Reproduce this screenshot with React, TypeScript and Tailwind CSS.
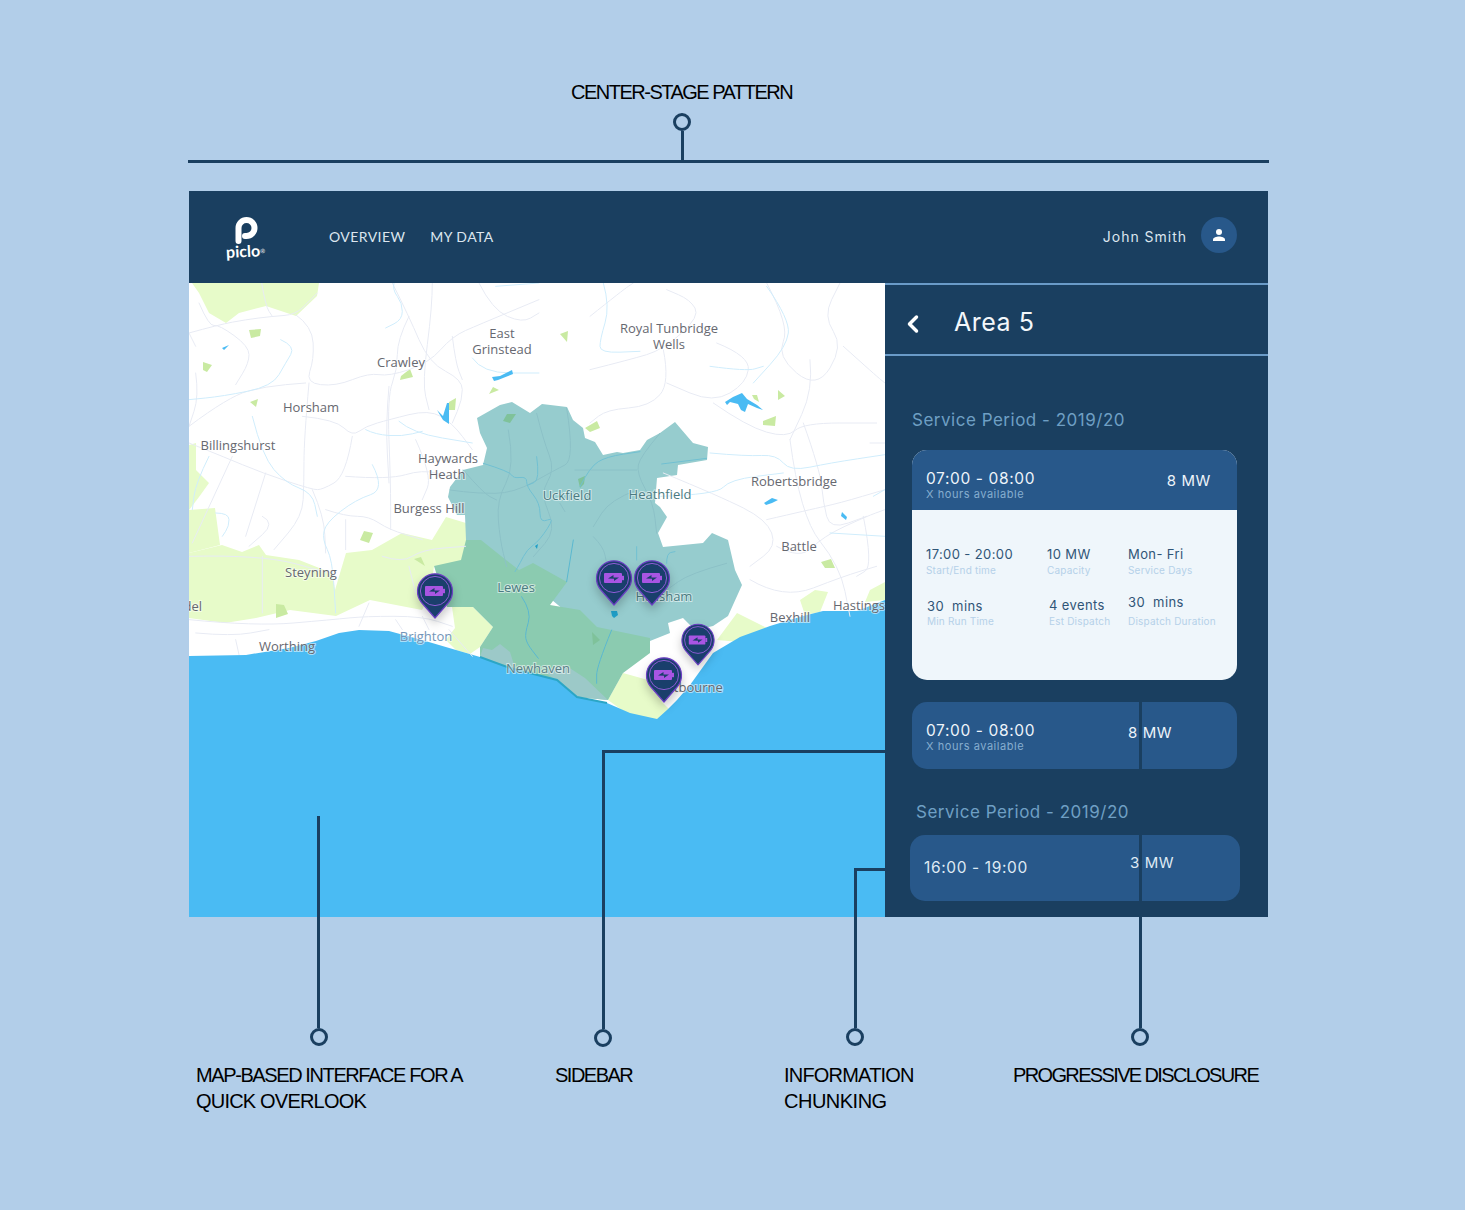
import { ChevronLeft } from "lucide-react"

const sans = "font-['Inter',sans-serif]"

// map linework, traced in crop coordinates (3x), grouped by crop origin
const westRoads = [
  "M0 150 L90 125 L170 110 L250 100 L320 95 L365 50 L385 30",
  "M30 60 L60 130 L90 125 L180 190 L180 240 L140 305",
  "M218 0 L230 70 L250 100",
  "M320 95 L370 130 L375 230 L350 300 L440 310 L540 270 L600 280 L720 240 L790 160 L870 125 L1050 50",
  "M610 0 L660 100 L720 240 L820 290 L820 350 L790 420",
  "M730 0 L730 70 L700 300 L720 380",
  "M660 100 L625 170 L625 260 L595 340 L605 600 L605 740",
  "M600 310 L590 420 L600 600",
  "M870 0 L910 80 L1000 120 L1050 90",
  "M790 160 L800 240 L820 290",
  "M360 300 L345 470 L345 600 L340 700 L255 800",
  "M0 430 L120 340 L230 310 L350 300",
  "M20 190 L0 150",
  "M20 270 L30 340 L0 430",
  "M340 400 L440 410 L490 460 L530 430 L600 410 L720 380 L790 420 L850 500",
  "M490 460 L470 580 L400 620 L370 620 L220 570 L100 520 L0 480",
  "M230 570 L170 760",
  "M470 580 L600 590 L700 560 L780 580",
  "M130 520 L10 780",
  "M370 620 L405 700 L410 810",
  "M410 680 L470 700 L540 700 L600 740 L700 770",
  "M470 710 L470 800",
  "M220 820 L220 990",
  "M0 820 L220 815 L420 870",
  "M0 1010 L200 1030 L430 1010 L530 1000 L700 1000 L790 1030",
  "M580 820 L640 840 L700 800 L830 790",
  "M660 850 L680 930",
  "M700 1000 L720 1040",
  "M620 1010 L640 1040",
  "M540 960 L510 1030",
  "M140 1070 L150 1115",
  "M20 1050 L130 1060 L240 1040",
  "M780 1040 L850 1120",
  "M680 470 L730 580 L700 650",
  "M220 700 L260 720 L180 790",
]
const westRivers = [
  "M615 0 L610 20 L640 60 L640 110 L590 135",
  "M275 170 L320 190 L290 240 L250 310 L100 340 L0 350",
  "M630 415 L670 450 L850 480",
  "M530 440 L560 455 L640 460 L700 445",
  "M550 545 L590 620 L500 650 L410 720 L400 770 L430 830 L440 990",
  "M190 400 L220 520 L290 600 L370 630 L385 700",
  "M850 225 L880 270 L1050 270",
  "M920 10 L1050 0",
  "M60 520 L20 600 L10 680",
  "M80 690 L120 690 L120 730 L100 760",
]
const eastRoads = [
  "M220 200 L240 300 L180 370 L50 380 L0 420",
  "M0 260 L120 230 L220 200 L330 100 L300 50 L230 20",
  "M380 180 L480 220 L470 300 L370 360 L230 300",
  "M530 0 L600 130 L560 220 L680 320 L760 190 L700 100 L750 0",
  "M370 360 L470 430 L590 465 L640 420 L860 420",
  "M600 470 L630 700 L750 850 L780 1000",
  "M660 230 L670 320 L600 470",
  "M220 570 L390 640 L530 710 L560 790 L480 850",
  "M560 790 L630 830 L700 760 L830 700 L885 680",
  "M530 710 L660 680 L750 660 L885 620",
  "M480 890 L580 950 L760 880 L860 850",
  "M640 420 L690 560 L700 660 L720 740 L830 700",
  "M820 700 L850 850 L800 880",
  "M760 190 L860 280 L885 300",
  "M840 480 L885 480",
  "M0 100 L100 20 L130 0",
]
const eastRivers = [
  "M360 250 L470 265 L520 250",
  "M530 10 L600 110 L590 190 L490 300",
  "M40 0 L60 70 L30 170 L30 210 L150 205",
  "M360 510 L470 520 L560 515 L600 565 L720 540 L885 515",
  "M210 640 L380 635 L420 590 L580 570",
  "M720 750 L885 760",
  "M850 640 L885 620",
]
const tealRoads = [
  "M265 120 L285 230 L230 330 L240 450 L260 530",
  "M350 70 L370 150 L405 240 L360 310 L410 420 L340 500",
  "M440 55 L465 210 L405 240 L280 310 L170 310 L90 300",
  "M720 130 L660 200 L650 250 L700 340 L710 430",
  "M465 240 L650 240",
  "M650 300 L570 330 L520 410",
  "M420 340 L435 365",
  "M130 240 L190 310 L230 330",
  "M520 440 L550 470 L560 520",
  "M920 520 L810 550 L740 600",
]
const tealRivers = [
  "M190 220 L270 245 L280 265 L320 260 L320 290 L360 340 L360 400 L405 380 L360 450 L320 480 L300 520 L285 545",
  "M350 200 L360 270 L325 285",
  "M480 290 L510 230 L560 200 L660 185",
  "M725 222 L860 205",
  "M650 470 L650 510",
  "M740 520 L740 490 L765 485",
]
const coastRivers = [
  "M365 170 L395 215 L375 280 L380 310 L415 355",
  "M635 270 L590 380 L590 430",
  "M520 0 L500 125",
]

// rounds a traced polyline into a quadratic curve through its midpoints
function smooth(d: string) {
  const pts = d.replace(/[ML]/g, "").trim().split(/\s+/).map(Number)
  const xy: [number, number][] = []
  for (let i = 0; i < pts.length; i += 2) xy.push([pts[i], pts[i + 1]])
  let out = `M${xy[0][0]} ${xy[0][1]}`
  for (let i = 1; i < xy.length - 1; i++) {
    const mx = (xy[i][0] + xy[i + 1][0]) / 2
    const my = (xy[i][1] + xy[i + 1][1]) / 2
    out += ` Q${xy[i][0]} ${xy[i][1]} ${mx} ${my}`
  }
  const last = xy[xy.length - 1]
  return `${out} L${last[0]} ${last[1]}`
}

const labels: [string, number, number, string?][] = [
  ["East", 502, 338],
  ["Grinstead", 502, 354],
  ["Royal Tunbridge", 669, 333],
  ["Wells", 669, 349],
  ["Crawley", 401, 367],
  ["Horsham", 311, 412],
  ["Billingshurst", 238, 450],
  ["Haywards", 448, 463],
  ["Heath", 447, 479],
  ["Burgess Hill", 429, 513],
  ["Uckfield", 567, 500, "#4b7b81"],
  ["Heathfield", 660, 499, "#4b7b81"],
  ["Robertsbridge", 794, 486],
  ["Battle", 799, 551],
  ["Steyning", 311, 577],
  ["Lewes", 516, 592, "#4b7b81"],
  ["Hailsham", 664, 601, "#4b7b81"],
  ["Bexhill", 790, 622],
  ["Hastings", 859, 610],
  ["Brighton", 426, 641, "#7295b8"],
  ["Worthing", 287, 651],
  ["Newhaven", 538, 673, "#5a7f86"],
  ["Eastbourne", 688, 692],
  ["Arundel", 178, 611],
]

function Pin({ x, y, s = 1 }: { x: number; y: number; s?: number }) {
  return (
    <g transform={`translate(${x} ${y}) scale(${s})`} className="drop-shadow-[0_5px_5px_rgba(0,0,0,0.22)]">
      <path d="M0 27 L-13.5 11.5 A17.5 17.5 0 1 1 13.5 11.5 Z" fill="#1a3f6c" stroke="#6b3fc4" strokeWidth="1.2" strokeLinejoin="round" />
      <circle r="14.6" fill="none" stroke="#9a5fe0" strokeWidth="0.9" />
      <rect x="-10" y="-5" width="18" height="10" rx="1" fill="#a855e3" />
      <rect x="8" y="-2.2" width="2" height="4.4" fill="#a855e3" />
      <path d="M-6 0.6 L-0.5 -3 L-0.5 -0.6 L5 -0.6 L0 3 L0 0.8 Z" fill="#1a3f6c" />
    </g>
  )
}

function Lines({ list, origin, road, river, riverColor }: { list: string[]; origin: string; road: string; river: string[]; riverColor: string }) {
  return (
    <g transform={`translate(${origin}) scale(0.3333)`} fill="none" strokeWidth="3" strokeLinecap="round">
      <g stroke={road}>{list.map((d) => <path key={d} d={smooth(d)} />)}</g>
      <g stroke={riverColor}>{river.map((d) => <path key={d} d={smooth(d)} />)}</g>
    </g>
  )
}

function MapCanvas() {
  return (
    <svg viewBox="189 283 696 634" className="block w-[696px] h-[634px] shrink-0 bg-white">
      {/* land cover */}
      <g fill="#e7fbc9">
        <path d="M192 283 L319 283 L317 296 L296 316 L266 306 L239 313 L226 323 L209 313 L199 293 Z" />
        <path d="M189 553 L222 545 L242 552 L259 545 L266 555 L299 560 L332 573 L335 590 L346 553 L372 550 L402 533 L432 540 L446 517 L466 523 L466 560 L472 575 L434 566 L430 595 L422 610 L370 600 L336 616 L290 610 L256 618 L225 623 L189 618 Z" />
        <path d="M189 445 L196 443 L196 470 L209 483 L199 497 L189 510 Z M189 510 L215 508 L220 545 L189 553 Z" />
        <path d="M452 607 L473 607 L493 627 L480 647 L470 654 L456 650 L446 640 L455 628 Z" />
        <path d="M608 700 L623 673 L648 680 L663 703 L672 712 L657 722 L630 716 Z" />
        <path d="M717 640 L737 613 L757 623 L767 628 L740 642 Z M800 600 L815 590 L828 592 L820 612 L805 615 Z M870 590 L885 582 L885 600 L865 602 Z" />
      </g>
      <path d="M477 418 L480 433 L487 448 L483 465 L463 470 L450 487 L448 497 L457 515 L465 515 L466 540 L481 560 L540 590 L600 640 L650 641 L670 633 L668 623 L683 618 L690 625 L695 630 L713 626 L728 616 L742 585 L735 570 L728 540 L712 533 L703 543 L663 547 L658 533 L667 517 L660 507 L655 503 L657 478 L677 475 L678 465 L707 460 L708 447 L693 443 L675 422 L660 433 L647 440 L640 450 L623 453 L617 452 L603 455 L595 442 L585 438 L583 428 L573 420 L567 407 L542 404 L530 413 L512 402 L500 405 Z" fill="#96ccce" />
      <path d="M434 566 L461 560 L466 540 L481 540 L506 560 L519 570 L533 563 L567 582 L550 605 L580 610 L597 627 L650 638 L650 653 L623 673 L608 700 L577 697 L557 680 L510 668 L480 657 L480 647 L493 627 L473 607 L447 607 Z" fill="#8bcbb0" />
      <path d="M480 657 L483 648 L492 650 L500 644 L510 652 L515 668 Z M545 672 L565 665 L585 678 L608 700 L577 697 Z" fill="#9cc9c8" />
      <g fill="#c9eaa2">
        <path d="M249 330 L261 329 L260 336 L251 338 Z M203 362 L212 365 L207 372 L203 370 Z M401 376 L410 369 L413 377 L400 380 Z M250 402 L258 399 L256 407 Z M449 402 L456 398 L455 410 L448 410 Z M360 540 L364 531 L373 533 L369 543 Z M414 559 L421 557 L425 566 Z M276 604 L284 605 L288 614 L276 618 Z M585 428 L597 421 L600 428 L590 432 Z M752 395 L757 395 L759 402 L754 399 Z M763 421 L776 416 L775 426 L763 425 Z M821 562 L831 559 L835 568 L825 568 Z M560 334 L568 331 L567 342 Z M493 387 L499 390 L489 394 Z M778 390 L785 396 L778 400 Z" />
      </g>
      <path d="M507 414 L516 414 L510 423 L503 421 Z M578 479 L585 476 L584 484 L580 488 Z M592 632 L600 640 L593 645 Z" fill="#7fc29a" />
      {/* coast */}
      <path d="M189 656 L246 655 L289 648 L316 641 L339 633 L359 630 L389 631 L422 640 L456 650 L480 657 L510 668 L557 680 L577 697 L607 703 L630 713 L657 719 L667 710 L677 700 L690 685 L713 653 L740 637 L770 626 L803 616 L823 611 L857 611 L885 600 L885 917 L189 917 Z" fill="#4abbf3" />
      <path d="M480 657 L510 668 L557 680 L577 697 L607 703" fill="none" stroke="#2ba6c6" strokeWidth="2" />
      {/* roads and rivers */}
      <Lines list={westRoads} origin="189 283" road="#e8ebf4" river={westRivers} riverColor="#d0edfc" />
      <Lines list={eastRoads} origin="590 283" road="#e8ebf4" river={eastRivers} riverColor="#d0edfc" />
      <Lines list={tealRoads} origin="420 390" road="#8cc1c7" river={tealRivers} riverColor="#70c0d2" />
      <Lines list={[]} origin="400 540" road="#8cc1c7" river={coastRivers} riverColor="#5ab8d0" />
      {/* lakes */}
      <g fill="#4abbf3">
        <path d="M492 377 L500 376 L512 370 L513 374 L498 380 L494 381 Z" />
        <path d="M437 410 L443 416 L447 403 L449 403 L449 424 L443 420 Z" />
        <path d="M725 402 L733 397 L742 393 L747 399 L757 405 L763 410 L757 408 L748 404 L745 412 L741 410 L738 404 L730 402 L727 405 Z" />
        <path d="M764 503 L772 498 L778 500 L772 503 L766 505 Z M842 512 L847 517 L846 520 L841 516 Z M222 348 L229 345 L224 350 Z" />
      </g>
      <path d="M611 611 L617 611 L618 615 L614 618 L612 616 Z M535 546 L538 544 L537 549 Z" fill="#1f9fc8" />
      {/* place names */}
      <g className="font-['Open_Sans',sans-serif] text-[13px] font-medium" textAnchor="middle">
        {labels.map(([name, x, y, color]) => (
          <text
            key={name}
            x={x}
            y={y}
            fill={color ?? "#666870"}
            stroke="rgba(255,255,255,0.55)"
            strokeWidth="2"
            paintOrder="stroke"
          >
            {name}
          </text>
        ))}
      </g>
      <Pin x={435} y={591} />
      <Pin x={614} y={578} />
      <Pin x={652} y={578} />
      <Pin x={698} y={640} s={0.92} />
      <Pin x={664} y={675} />
    </svg>
  )
}

function Stat({ value, label, className = "", labelClass = "mt-[1px]" }: { value: string; label: string; className?: string; labelClass?: string }) {
  return (
    <div className={className}>
      <p className="text-[13px] leading-[16px] text-[#2f5577] tracking-[0.03em] whitespace-pre">{value}</p>
      <p className={`text-[10px] leading-[14px] text-[#b5d1e9] tracking-[0.02em] whitespace-nowrap ${labelClass}`}>{label}</p>
    </div>
  )
}

function Sidebar() {
  return (
    <aside className={`w-[383px] h-[634px] bg-[#1a3f60] ${sans} overflow-hidden`}>
      <div className="h-[73px] border-t-2 border-b-2 border-[#6a9bc8] flex items-center">
        <ChevronLeft className="w-[28px] h-[28px] ml-[14px] mt-[8px] text-white" strokeWidth={3} />
        <h2 className="ml-[27px] mt-[4px] text-[25px] leading-[30px] text-[#f3f7fb] tracking-[0.02em]">Area 5</h2>
      </div>
      <p className="mt-[53px] ml-[27px] text-[17px] leading-[22px] text-[#6f9fc4] tracking-[0.03em]">Service Period - 2019/20</p>
      <div className="mt-[19px] ml-[27px] w-[325px] h-[230px] rounded-[15px] overflow-hidden bg-[#eff6fb]">
        <div className="h-[60px] bg-[#28588a] flex justify-between pl-[14px] pr-[26px] pt-[20px]">
          <div>
            <p className="text-[15.5px] leading-[18px] text-[#eef4fa] tracking-[0.04em]">07:00 - 08:00</p>
            <p className="text-[11px] leading-[13px] text-[#86aed0] tracking-[0.05em]">X hours available</p>
          </div>
          <p className="text-[15px] leading-[18px] mt-[2px] text-[#eef4fa] tracking-[0.04em]">8 MW</p>
        </div>
        <div className="grid grid-cols-[121px_81px_1fr] pl-[14px] pt-[36px] gap-y-[20px]">
          <Stat value="17:00 - 20:00" label="Start/End time" />
          <Stat value="10 MW" label="Capacity" />
          <Stat value="Mon- Fri" label="Service Days" />
          <Stat value="30  mins" label="Min Run Time" className="mt-[1px] ml-[1px]" labelClass="mt-0" />
          <Stat value="4 events" label="Est Dispatch" className="ml-[2px]" />
          <Stat value="30  mins" label="Dispatch Duration" className="-mt-[3px]" labelClass="mt-[4px]" />
        </div>
      </div>
      <div className="mt-[22px] h-[67px] w-[325px] ml-[27px] rounded-[15px] bg-[#28588a] relative flex items-center pl-[14px]">
        <div className="mt-[3px]">
          <p className="text-[15.5px] leading-[18px] text-[#eef4fa] tracking-[0.04em]">07:00 - 08:00</p>
          <p className="text-[11px] leading-[13px] text-[#86aed0] tracking-[0.05em]">X hours available</p>
        </div>
        <p className="absolute left-[216px] top-[22px] text-[15px] leading-[18px] text-[#eef4fa] tracking-[0.04em]">8 MW</p>
      </div>
      <p className="mt-[32px] ml-[31px] text-[17px] leading-[22px] text-[#6f9fc4] tracking-[0.03em]">Service Period - 2019/20</p>
      <div className="mt-[12px] ml-[25px] w-[330px] h-[66px] rounded-[15px] bg-[#28588a] relative flex items-center pl-[14px]">
        <p className="text-[15.5px] leading-[18px] text-[#dfeaf4] tracking-[0.04em]">16:00 - 19:00</p>
        <p className="absolute left-[220px] top-[19px] text-[15px] leading-[18px] text-[#dfeaf4] tracking-[0.04em]">3 MW</p>
      </div>
    </aside>
  )
}

function AppWindow() {
  return (
    <div className="ml-[189px] mt-[28px] w-[1079px] h-[726px]">
      <header className="h-[92px] bg-[#1a3f60] flex items-center">
        <div className="w-[114px] flex flex-col items-center shrink-0">
          <svg width="24" height="28" viewBox="0 0 24 28" className="mt-[1px]">
            <path d="M4.5 24 L4.5 11 A8 8 0 1 1 12.5 19 L11 19" fill="none" stroke="#fff" strokeWidth="6" strokeLinecap="round" strokeLinejoin="round" />
          </svg>
          <p className="font-['Lato',sans-serif] font-bold text-[16px] leading-[16px] -mt-[2px] text-white -rotate-3">piclo<sup className="text-[6px] font-normal">®</sup></p>
        </div>
        <nav className="ml-[26px] flex gap-[25px] font-['Lato',sans-serif] text-[14px] leading-[18px] tracking-[0.03em] text-[#dce6ef]">
          <a>OVERVIEW</a>
          <a>MY DATA</a>
        </nav>
        <div className={`ml-auto mr-[31px] flex items-center gap-[14px] -mt-[4px] ${sans}`}>
          <span className="text-[14px] leading-[18px] text-[#dce6ef] tracking-[0.07em] mt-[3px]">John Smith</span>
          <span className="w-[36px] h-[36px] rounded-full bg-[#28588a] grid place-items-center">
            <svg width="14" height="14" viewBox="0 0 14 14" fill="#fff">
              <circle cx="7" cy="4" r="3" />
              <path d="M1 13 V11.5 C1 9.6 4.5 8.6 7 8.6 C9.5 8.6 13 9.6 13 11.5 V13 Z" />
            </svg>
          </span>
        </div>
      </header>
      <div className="flex">
        <MapCanvas />
        <Sidebar />
      </div>
    </div>
  )
}

function Callouts() {
  const line = "absolute bg-[#1a3f60]"
  const dot = "absolute w-[18px] h-[18px] rounded-full border-[3px] border-[#1a3f60]"
  return (
    <>
      <div className={`${line} left-[317px] top-[816px] w-[3px] h-[212px]`} />
      <div className={`${dot} left-[310px] top-[1028px]`} />
      <div className={`${line} left-[602px] top-[750px] w-[283px] h-[3px]`} />
      <div className={`${line} left-[602px] top-[750px] w-[3px] h-[279px]`} />
      <div className={`${dot} left-[594px] top-[1029px]`} />
      <div className={`${line} left-[854px] top-[868px] w-[31px] h-[3px]`} />
      <div className={`${line} left-[854px] top-[868px] w-[3px] h-[160px]`} />
      <div className={`${dot} left-[846px] top-[1028px]`} />
      <div className={`${line} left-[1139px] top-[702px] w-[3px] h-[326px]`} />
      <div className={`${dot} left-[1131px] top-[1028px]`} />
    </>
  )
}

export default function App() {
  const note = "font-['Liberation_Sans',sans-serif] text-[20px] leading-[26px] tracking-[-0.075em] text-black"
  return (
    <div className="relative w-[1465px] h-[1210px] bg-[#b2cee9] overflow-hidden">
      <h1 className={`${note} pt-[79px] pl-[571px]`}>CENTER-STAGE PATTERN</h1>
      <div className="ml-[673px] mt-[8px] w-[18px] h-[18px] rounded-full border-[3px] border-[#1a3f60]" />
      <div className="ml-[681px] w-[3px] h-[29px] bg-[#1a3f60]" />
      <div className="ml-[188px] w-[1081px] h-[3px] bg-[#1a3f60]" />
      <AppWindow />
      <div className={`${note} mt-[145px] ml-[196px] grid grid-cols-[359px_229px_229px_1fr]`}>
        <div>
          <p className="tracking-[-0.07em]">MAP-BASED INTERFACE FOR A</p>
          <p className="tracking-[-0.04em]">QUICK OVERLOOK</p>
        </div>
        <p>SIDEBAR</p>
        <div>
          <p className="tracking-[-0.04em]">INFORMATION</p>
          <p className="tracking-[-0.025em]">CHUNKING</p>
        </div>
        <p className="tracking-[-0.082em]">PROGRESSIVE DISCLOSURE</p>
      </div>
      <Callouts />
    </div>
  )
}
